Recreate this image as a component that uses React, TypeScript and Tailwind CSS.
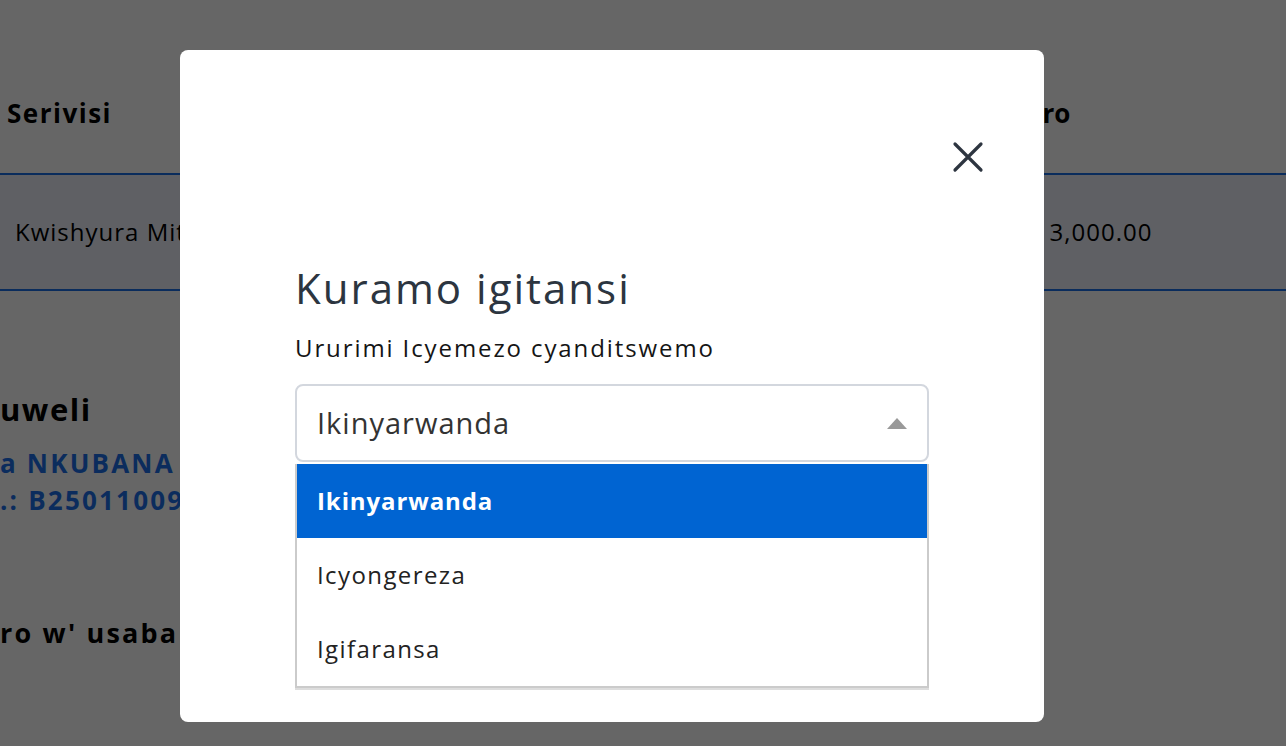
import React from 'react'

const font = { fontFamily: '"Open Sans", "Liberation Sans", sans-serif' }

const options = ['Ikinyarwanda', 'Icyongereza', 'Igifaransa']

export default function App() {
  const selected = 0

  return (
    <div className="relative h-[746px] w-[1286px] overflow-hidden bg-white text-black" style={font}>
      {/* page behind the modal */}
      <div className="pt-[96px]">
        <div className="flex h-[77px] items-start">
          <div className="w-[990px] pl-[7px] text-[26px] font-bold leading-[34px] tracking-[1.5px]">Serivisi</div>
          <div className="text-[26px] font-bold leading-[34px]">Igiciro</div>
        </div>
        <div className="flex h-[118px] items-center border-y-2 border-[#1a6fe6] bg-[#edf0fa]">
          <div className="w-[990px] pl-[15px] text-[24px] tracking-[1px]">Kwishyura Mituweli</div>
          <div className="text-[24px] tracking-[1px]">RWF 3,000.00</div>
        </div>
        <div className="pt-[100px] text-[31px] font-bold leading-[36px] tracking-[1.5px]">uweli</div>
        <div className="pt-[18px] text-[26px] font-bold leading-[37px] tracking-[2.2px] text-[#1d6fe8]">a NKUBANA</div>
        <div className="text-[26px] font-bold leading-[37px] tracking-[2.2px] text-[#1d6fe8]">.: B25011009</div>
        <div className="pt-[96px] text-[27px] font-bold leading-[36px] tracking-[2.2px]">ro w' usaba serivisi</div>
      </div>

      {/* overlay + modal */}
      <div className="absolute inset-0 bg-black/60">
        <div className="ml-[180px] mt-[50px] h-[672px] w-[864px] rounded-lg bg-white">
          <div className="flex justify-end pr-[58px] pt-[89px]">
            <button className="text-[#2d3540]">
              <svg width="36" height="36" viewBox="0 0 36 36" fill="none" stroke="currentColor" strokeWidth="3.2" strokeLinecap="round">
                <path d="M5 5 L31 31 M31 5 L5 31" />
              </svg>
            </button>
          </div>
          <div className="pl-[115px] pr-[115px] pt-[88px]">
            <h2 className="text-[42px] leading-[50px] tracking-[2px] text-[#2c3540]">Kuramo igitansi</h2>
            <div className="pt-[20px] text-[24px] leading-[30px] tracking-[1.9px] text-[#151515]">Ururimi Icyemezo cyanditswemo</div>
            <div className="relative mt-[21px] w-[634px]">
              <div className="flex h-[78px] items-center justify-between rounded-lg border-2 border-[#d3d7de] px-[20px]">
                <span className="text-[29px] tracking-[1px] text-[#333]">{options[selected]}</span>
                <svg width="20" height="11" viewBox="0 0 20 11">
                  <path d="M10 0 L20 11 L0 11 Z" fill="#999" />
                </svg>
              </div>
              <ul className="absolute left-0 top-[80px] w-[634px] border-2 border-t-0 border-[#cbcbcb] bg-white shadow-[0_2px_0_#ddd]">
                {options.map((o, i) => (
                  <li
                    key={o}
                    className={
                      i === selected
                        ? 'flex h-[74px] items-center bg-[#0064d2] pl-[20px] text-[24px] font-bold tracking-[0.9px] text-white'
                        : 'flex h-[74px] items-center pl-[20px] text-[24px] tracking-[1.4px] text-[#222]'
                    }
                  >
                    {o}
                  </li>
                ))}
              </ul>
            </div>
          </div>
        </div>
      </div>
    </div>
  )
}
